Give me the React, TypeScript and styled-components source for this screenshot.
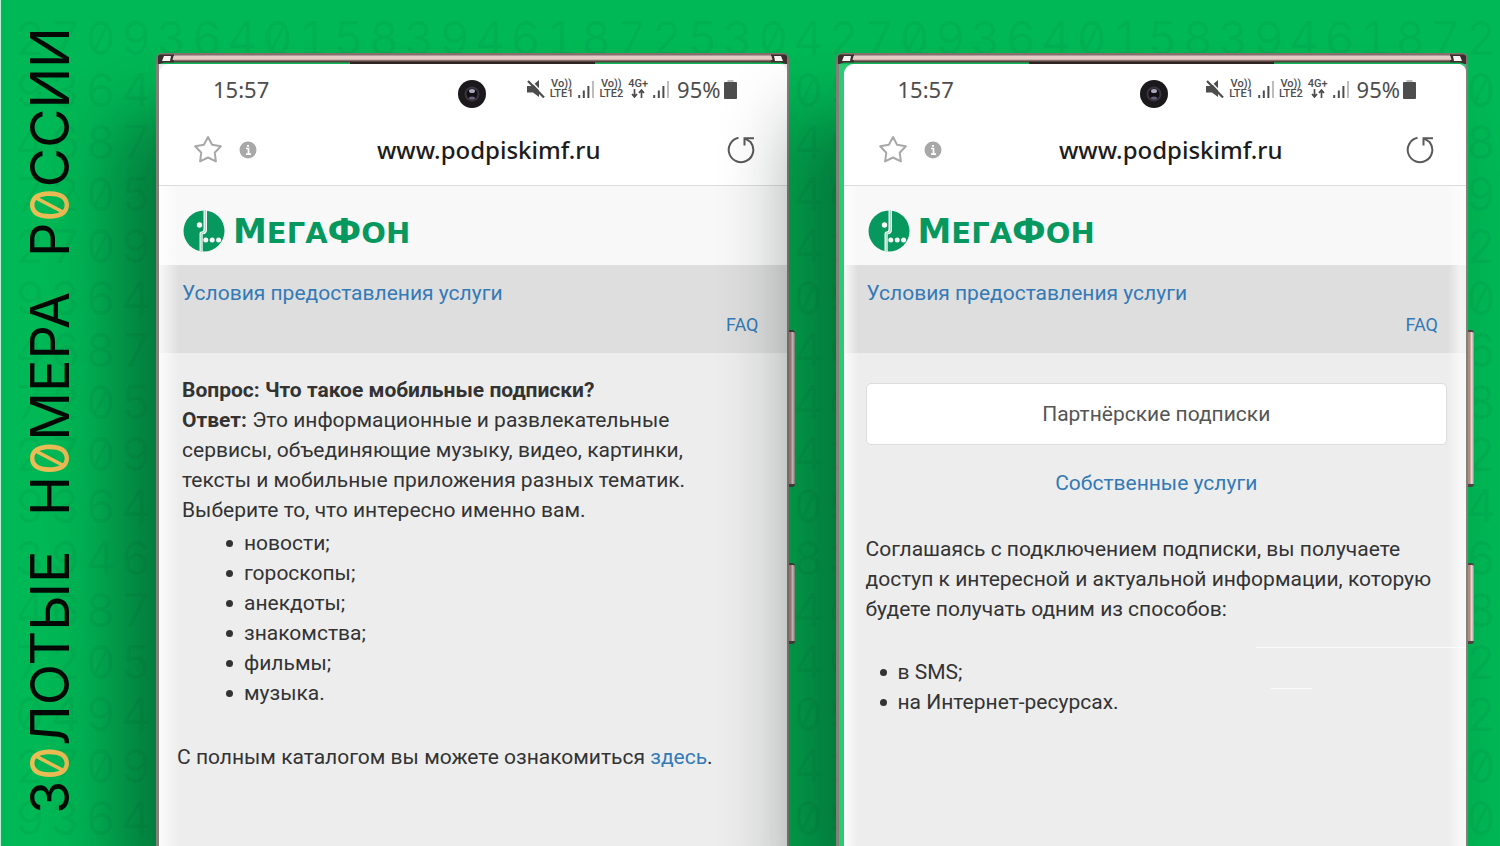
import React from "react";
import styled, { createGlobalStyle } from "styled-components";

const GlobalStyle = createGlobalStyle`
  *, *::before, *::after { box-sizing: border-box; }
  body { margin: 0; background: #00b956; }
  a { text-decoration: none; }
`;

const Page = styled.div`
  position: relative;
  display: flex;
  min-height: 100vh;
  padding: 53px 32px 0 0;
  overflow: hidden;
  background: #00b956;
  border-left: 1px solid #bfeed5;
  font-family: Roboto, "Liberation Sans", sans-serif;
`;

const Backdrop = styled.div`
  position: absolute;
  inset: 0;
  padding: 12px 4px 0 14px;
  color: rgba(0, 60, 30, 0.07);
  font-family: Inter, sans-serif;
  font-feature-settings: "zero", "tnum";
  font-size: 46px;
  font-weight: 400;
  line-height: 52px;
`;

const DigitRow = styled.div`
  display: flex;
  justify-content: space-between;
`;

const Sidebar = styled.h1`
  position: relative;
  flex: 0 0 155px;
  display: flex;
  justify-content: flex-end;
  gap: 35px;
  height: 784px;
  margin: -26px 0 0;
  padding: 0 19px 0 0;
  writing-mode: vertical-rl;
  transform: rotate(180deg);
  font-family: Inter, sans-serif;
  font-feature-settings: "zero", "tnum";
  font-size: 54px;
  font-weight: 400;
  line-height: 60px;
  color: #050a07;
`;

const Gold = styled.span`
  color: #edbd55;
`;

const Phones = styled.main`
  flex: 1;
  display: grid;
  grid-template-columns: 1fr 1fr;
  gap: 47px;
`;

const Frame = styled.section<{ $rail?: boolean }>`
  position: relative;
  min-width: 0;
  display: flex;
  flex-direction: column;
  border: solid #857f7a;
  border-width: 0 2px 0 3px;
  border-radius: 8px 8px 0 0;
  background: ${(p) => (p.$rail ? "#2acb72" : "#ededed")};
  padding-left: ${(p) => (p.$rail ? "5px" : "0")};
  box-shadow: -38px 64px 76px rgba(10, 20, 20, 0.42);
`;

const Bezel = styled.div<{ $rail?: boolean }>`
  display: flex;
  height: 11px;
  margin: 0 -2px 0 ${(p) => (p.$rail ? "-8px" : "-3px")};
  border-radius: 6px 6px 0 0;
  overflow: hidden;
  background: #00b956;
`;

const BezelBar = styled.div`
  flex: 1;
  display: flex;
  justify-content: center;
  align-items: flex-end;
  background: linear-gradient(#85706d 0 2px, #e4cbc6 3px 6px, #b99a96 7px, #55423f 8px 9px, #12b65a 10px 11px);
`;

const Speaker = styled.div`
  width: 41%;
  height: 2px;
  background: #2c2523;
`;

const SideKey = styled.div<{ $top: number; $height: number }>`
  position: absolute;
  right: -8px;
  top: ${(p) => p.$top}px;
  width: 6px;
  height: ${(p) => p.$height}px;
  border: solid #4a4341;
  border-width: 2px 0 3px;
  border-radius: 0 3px 3px 0;
  background: linear-gradient(90deg, #b08a7c 0 2px, #e2d6d3 3px 4px, #8f8683);
`;

const Screen = styled.div`
  position: relative;
  flex: 1;
  border-radius: 10px 8px 0 0;
  overflow: hidden;
  background: #ededed;
`;

const EdgeGlow = styled.div<{ $both?: boolean }>`
  position: absolute;
  inset: 122px 0 0;
  pointer-events: none;
  background: ${(p) =>
    p.$both
      ? "linear-gradient(90deg, rgba(255,255,255,.8), transparent 14px calc(100% - 18px), rgba(255,255,255,.6) calc(100% - 6px))"
      : "linear-gradient(90deg, rgba(255,255,255,.8), transparent 20px)"};
`;

const Camera = styled.svg`
  position: absolute;
  top: 15px;
  left: 50%;
  margin-left: -16px;
`;

const StatusBar = styled.div`
  display: flex;
  align-items: center;
  height: 52px;
  padding: 0 50px 2px 54px;
  background: #fff;
  color: #4d4d4d;
  font-family: "Noto Sans", sans-serif;
  font-size: 22px;
  line-height: 30px;
`;

const StatusIcons = styled.div`
  display: flex;
  align-items: center;
  gap: 5px;
  margin-left: auto;
`;

const Network = styled.div`
  font-family: Roboto, sans-serif;
  font-size: 11px;
  font-weight: 500;
  line-height: 10px;
  text-align: center;
`;

const Battery = styled.div`
  display: flex;
  align-items: center;
  gap: 3px;
  margin-left: 3px;
`;

const AddressBar = styled.div`
  display: flex;
  align-items: center;
  height: 70px;
  padding: 0 32px 2px 34px;
  border-bottom: 1px solid #dcdcdc;
  background: #fff;
`;

const IconButton = styled.button`
  display: flex;
  padding: 0;
  margin-right: 16px;
  border: 0;
  background: none;
`;

const ReloadButton = styled(IconButton)`
  margin: 0;
`;

const Address = styled.input`
  flex: 1;
  min-width: 0;
  margin: 0 22px 0 0;
  padding: 0;
  border: 0;
  outline: 0;
  background: none;
  color: #1c1c1c;
  font-family: "Noto Sans", sans-serif;
  font-size: 24px;
  font-weight: 500;
  line-height: 34px;
  text-align: center;
`;

const Brand = styled.header`
  display: flex;
  align-items: center;
  gap: 8px;
  height: 79px;
  padding: 10px 24px 0;
  background: #f8f8f8;
`;

const Wordmark = styled.div`
  padding-top: 2px;
  color: #07985f;
  font-family: "DejaVu Sans", sans-serif;
  font-size: 29px;
  font-weight: 700;
  line-height: 40px;
`;

const Tall = styled.span`
  font-size: 34px;
`;

const TermsBar = styled.nav`
  display: flex;
  flex-direction: column;
  height: 88px;
  padding: 13px 28px 0 23px;
  background: #dedede;
`;

const Link = styled.a`
  color: #337ab7;
  font-size: 21px;
  line-height: 30px;
`;

const FaqLink = styled(Link)`
  align-self: flex-end;
  margin-top: 2px;
  font-size: 18px;
`;

const Article = styled.article`
  padding: 22px 28px 0 23px;
  color: #333;
  font-size: 21px;
  line-height: 30px;
`;

const Text = styled.p`
  margin: 0;
`;

const Catalog = styled(Text)`
  margin: 34px 0 0 -5px;
`;

const List = styled.ul<{ $indent: number }>`
  margin: 3px 0 0;
  padding-left: ${(p) => p.$indent}px;
`;

const Item = styled.li`
  position: relative;
  list-style: none;
  &::before {
    content: "";
    position: absolute;
    left: -18px;
    top: 12px;
    width: 7px;
    height: 7px;
    border-radius: 50%;
    background: #333;
  }
`;

const Services = styled.article`
  position: relative;
  padding: 30px 19px 0 22px;
  color: #333;
  font-size: 21px;
  line-height: 30px;
`;

const Partner = styled.button`
  display: block;
  width: 100%;
  height: 62px;
  border: 1px solid #dcdcdc;
  border-radius: 5px;
  background: #fff;
  color: #555;
  font: 21px/30px Roboto, sans-serif;
`;

const Own = styled.div`
  padding: 23px 0 36px;
  text-align: center;
`;

const Ways = styled.div`
  margin-top: 33px;
`;

const Streak = styled.i<{ $top: number; $right: number; $width: number }>`
  position: absolute;
  top: ${(p) => p.$top}px;
  right: ${(p) => p.$right}px;
  width: ${(p) => p.$width}px;
  height: 1px;
  background: #fafafa;
`;

const ROWS = [
  "270936401583946187253042709364015839461872",
  "936401583946187253042709364015839461872530",
  "468725304270936401583946187253042709364018",
  "720539461872530427093640158394618725304279",
  "270936401583946187253042709364015839461872",
  "936401583946187253042709364015839461872530",
  "468725304270936401583946187253042709364016",
  "720539461872530427093640158394618725304278",
  "270936401583946187253042709364015839461872",
  "936401583946187253042709364015839461872534",
  "394618725304270936401583946187253042709366",
  "468725304270936401583946187253042709364018",
  "720539461872530427093640158394618725304272",
  "049401583946187253042709364015839461872532",
  "270936401583946187253042709364015839461870",
  "936401583946187253042709364015839461872530",
];

const Mute = () => (
  <svg width="18" height="18" viewBox="0 0 18 18" aria-hidden="true">
    <path d="M0 6H5L12 0V17L6 12.500H0z" fill="#4d4d4d" />
    <path d="M3 0L18 15.500" stroke="#fff" strokeWidth="1.500" />
    <path d="M1 1L17 17.500" stroke="#4d4d4d" strokeWidth="2.200" />
  </svg>
);

const Signal = () => (
  <svg width="16" height="18" viewBox="0 0 16 18" aria-hidden="true">
    <path d="M1.200 15v3M5.800 10.500V18M10.400 6V18" stroke="#4d4d4d" strokeWidth="2" />
    <path d="M15 1V18" stroke="#bdbdbd" strokeWidth="2" />
  </svg>
);

const Arrows = () => (
  <svg width="14" height="9" viewBox="0 0 14 9" aria-hidden="true">
    <path d="M3.500 0v8M1 5l2.500 3L6 5M10.500 9V1M8 4l2.500-3L13 4" fill="none" stroke="#4d4d4d" strokeWidth="1.700" />
  </svg>
);

const ArrowRow = styled.div`
  display: flex;
  justify-content: center;
  height: 10px;
`;

const Logo = () => (
  <svg width="42" height="42" viewBox="0 0 42 42" aria-hidden="true">
    <circle cx="21" cy="21" r="20.500" fill="#07985f" />
    <path d="M20.500 0H24V20Q24 24 19.700 24.300V42H16.500V23.500Q16.500 21.500 18.500 21.500Q20.500 21.500 20.500 19z" fill="#f8f8f8" />
    <path d="M22.300 0V20Q22.300 22.800 18.200 23.200V42" fill="none" stroke="#07985f" strokeWidth=".4" />
    <circle cx="16.500" cy="15" r="2.700" fill="#f8f8f8" />
    <circle cx="22.800" cy="30" r="2.500" fill="#f8f8f8" />
    <circle cx="29.200" cy="30" r="2.500" fill="#f8f8f8" />
    <circle cx="35.600" cy="30" r="2.500" fill="#f8f8f8" />
  </svg>
);

const Corner = ({ flip }: { flip?: boolean }) => (
  <svg width="18" height="11" viewBox="0 0 18 11" aria-hidden="true">
    <g transform={flip ? "translate(18 0) scale(-1 1)" : undefined}>
      <path d="M0 0H18V9.500H8L3 11H0z" fill="#85706d" />
      <path d="M2 3L4 1.500H18V9.500H8L3 11H2z" fill="#3a2f2d" />
      <path d="M8 3H15L14 8H6z" fill="#f7f3f2" />
      <path d="M18 3H17.500L16.500 7H18z" fill="#e4cbc6" />
    </g>
  </svg>
);

function Phone({ rail, children }: { rail?: boolean; children: React.ReactNode }) {
  return (
    <Frame $rail={rail}>
      <Bezel $rail={rail}>
        <Corner />
        <BezelBar>
          <Speaker />
        </BezelBar>
        <Corner flip />
      </Bezel>
      <Screen>
        <StatusBar>
          <time>15:57</time>
          <StatusIcons>
            <Mute />
            <Network>
              Vo))
              <br />
              LTE1
            </Network>
            <Signal />
            <Network>
              Vo))
              <br />
              LTE2
            </Network>
            <Network>
              4G+
              <ArrowRow>
                <Arrows />
              </ArrowRow>
            </Network>
            <Signal />
            <Battery>
              <span>95%</span>
              <svg width="13" height="19" viewBox="0 0 13 19" aria-hidden="true">
                <path d="M3.500 0h6v2h-6z" fill="#bdbdbd" />
                <rect y="2" width="13" height="17" rx="1" fill="#4d4d4d" />
              </svg>
            </Battery>
          </StatusIcons>
        </StatusBar>
        <AddressBar>
          <IconButton aria-label="В закладки">
            <svg width="30" height="30" viewBox="0 0 30 30">
              <path
                d="M15 2l4.100 7.800 8.700 1.500-6.100 6.400 1.200 8.700L15 22.500l-7.900 3.900 1.200-8.700-6.100-6.400 8.700-1.500z"
                fill="none"
                stroke="#a8a8a8"
                strokeWidth="2"
                strokeLinejoin="round"
              />
            </svg>
          </IconButton>
          <IconButton aria-label="О сайте">
            <svg width="18" height="18" viewBox="0 0 18 18">
              <circle cx="9" cy="9" r="8.500" fill="#a8a8a8" />
              <path d="M7 7.500h2.500V13M7 13.200h5M8 4.800h2" fill="none" stroke="#fff" strokeWidth="1.700" />
            </svg>
          </IconButton>
          <Address aria-label="Адрес" readOnly value="www.podpiskimf.ru" />
          <ReloadButton aria-label="Обновить">
            <svg width="28" height="29" viewBox="0 0 28 29">
              <path
                d="M11.500 2.800A12.300 12.300 0 1 0 23.500 7L18 3.500M27 3.200H17.500V10.500"
                fill="none"
                stroke="#5a5a5a"
                strokeWidth="2"
              />
            </svg>
          </ReloadButton>
        </AddressBar>
        <Brand>
          <Logo />
          <Wordmark>
            <Tall>М</Tall>ЕГА<Tall>Ф</Tall>ОН
          </Wordmark>
        </Brand>
        <TermsBar>
          <Link href="#terms">Условия предоставления услуги</Link>
          <FaqLink href="#faq">FAQ</FaqLink>
        </TermsBar>
        {children}
        <EdgeGlow $both={rail} />
        <Camera width="30" height="30" viewBox="0 0 30 30" aria-hidden="true">
          <circle cx="15" cy="15" r="14" fill="#1b191b" />
          <circle cx="15" cy="15" r="7.500" fill="#3a3541" />
          <circle cx="15" cy="15" r="5.500" fill="#121015" />
          <ellipse cx="15" cy="12" rx="3" ry="2" fill="#a9a6b8" />
          <ellipse cx="15" cy="19" rx="3" ry="1.500" fill="#67607a" />
        </Camera>
      </Screen>
      <SideKey $top={277} $height={157} />
      <SideKey $top={510} $height={81} />
    </Frame>
  );
}

export default function App() {
  return (
    <Page>
      <GlobalStyle />
      <Backdrop aria-hidden="true">
        {ROWS.map((row, i) => (
          <DigitRow key={i}>
            {row.split("").map((d, j) => (
              <span key={j}>{d}</span>
            ))}
          </DigitRow>
        ))}
      </Backdrop>
      <Sidebar>
        <span>
          З<Gold>0</Gold>ЛОТЫЕ
        </span>
        <span>
          Н<Gold>0</Gold>МЕРА
        </span>
        <span>
          Р<Gold>0</Gold>ССИИ
        </span>
      </Sidebar>
      <Phones>
        <Phone>
          <Article>
            <Text>
              <b>Вопрос: Что такое мобильные подписки?</b>
            </Text>
            <Text>
              <b>Ответ:</b> Это информационные и развлекательные
              <br />
              сервисы, объединяющие музыку, видео, картинки,
              <br />
              тексты и мобильные приложения разных тематик.
              <br />
              Выберите то, что интересно именно вам.
            </Text>
            <List $indent={62}>
              <Item>новости;</Item>
              <Item>гороскопы;</Item>
              <Item>анекдоты;</Item>
              <Item>знакомства;</Item>
              <Item>фильмы;</Item>
              <Item>музыка.</Item>
            </List>
            <Catalog>
              С полным каталогом вы можете ознакомиться <Link href="#catalog">здесь</Link>.
            </Catalog>
          </Article>
        </Phone>
        <Phone rail>
          <Services>
            <Partner>Партнёрские подписки</Partner>
            <Own>
              <Link href="#own">Собственные услуги</Link>
            </Own>
            <Text>
              Соглашаясь с подключением подписки, вы получаете
              <br />
              доступ к интересной и актуальной информации, которую
              <br />
              будете получать одним из способов:
            </Text>
            <Ways>
              <List $indent={32}>
                <Item>в SMS;</Item>
                <Item>на Интернет-ресурсах.</Item>
              </List>
            </Ways>
            <Streak $top={294} $right={0} $width={210} />
            <Streak $top={335} $right={154} $width={41} />
          </Services>
        </Phone>
      </Phones>
    </Page>
  );
}
